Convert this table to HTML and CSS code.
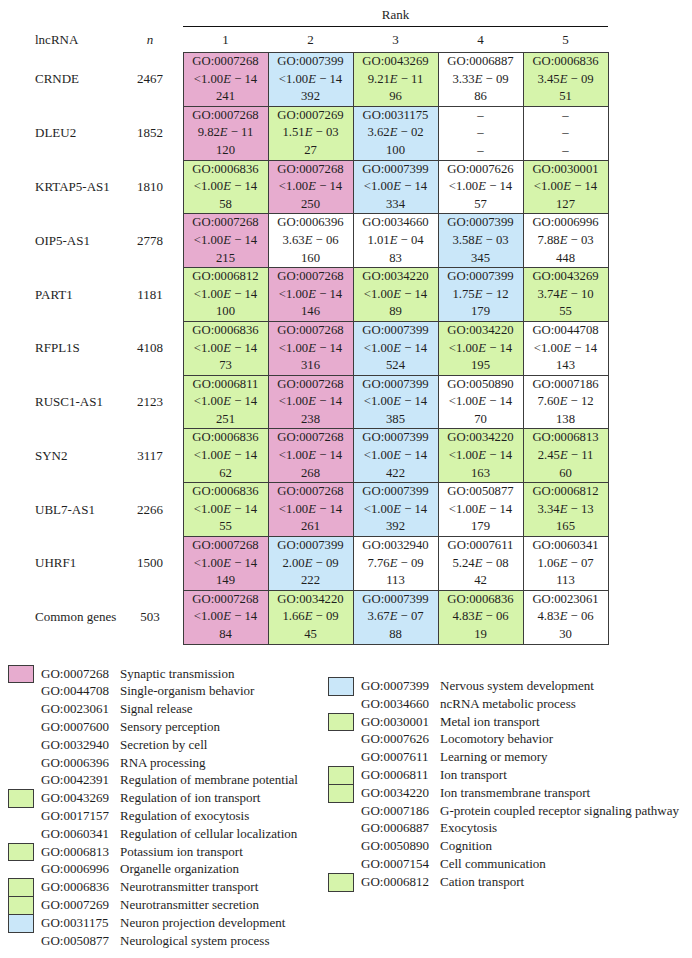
FILE: index.html
```html
<!DOCTYPE html>
<html>
<head>
<meta charset="utf-8">
<link rel="stylesheet" href="styles.css">
</head>
<body>
<table class="go-table">
  <colgroup>
    <col class="c-label"><col class="c-n"><col class="c-sp">
    <col class="c-d"><col class="c-d"><col class="c-d"><col class="c-d"><col class="c-d">
  </colgroup>
  <tr class="rank-row"><td></td><td></td><td></td><td colspan="5" class="rank">Rank</td></tr>
  <tr class="head-row"><td class="lbl">lncRNA</td><td class="n"><i>n</i></td><td></td><td>1</td><td>2</td><td>3</td><td>4</td><td>5</td></tr>
  <tr class="row"><td class="lbl">CRNDE</td><td class="n">2467</td><td></td>
    <td class="d pink">GO:0007268<br>&lt;1.00<i>E</i> − 14<br>241</td>
    <td class="d blue">GO:0007399<br>&lt;1.00<i>E</i> − 14<br>392</td>
    <td class="d green">GO:0043269<br>9.21<i>E</i> − 11<br>96</td>
    <td class="d">GO:0006887<br>3.33<i>E</i> − 09<br>86</td>
    <td class="d green">GO:0006836<br>3.45<i>E</i> − 09<br>51</td></tr>
  <tr class="row"><td class="lbl">DLEU2</td><td class="n">1852</td><td></td>
    <td class="d pink">GO:0007268<br>9.82<i>E</i> − 11<br>120</td>
    <td class="d green">GO:0007269<br>1.51<i>E</i> − 03<br>27</td>
    <td class="d blue">GO:0031175<br>3.62<i>E</i> − 02<br>100</td>
    <td class="d">–<br>–<br>–</td>
    <td class="d">–<br>–<br>–</td></tr>
  <tr class="row"><td class="lbl">KRTAP5-AS1</td><td class="n">1810</td><td></td>
    <td class="d green">GO:0006836<br>&lt;1.00<i>E</i> − 14<br>58</td>
    <td class="d pink">GO:0007268<br>&lt;1.00<i>E</i> − 14<br>250</td>
    <td class="d blue">GO:0007399<br>&lt;1.00<i>E</i> − 14<br>334</td>
    <td class="d">GO:0007626<br>&lt;1.00<i>E</i> − 14<br>57</td>
    <td class="d green">GO:0030001<br>&lt;1.00<i>E</i> − 14<br>127</td></tr>
  <tr class="row"><td class="lbl">OIP5-AS1</td><td class="n">2778</td><td></td>
    <td class="d pink">GO:0007268<br>&lt;1.00<i>E</i> − 14<br>215</td>
    <td class="d">GO:0006396<br>3.63<i>E</i> − 06<br>160</td>
    <td class="d">GO:0034660<br>1.01<i>E</i> − 04<br>83</td>
    <td class="d blue">GO:0007399<br>3.58<i>E</i> − 03<br>345</td>
    <td class="d">GO:0006996<br>7.88<i>E</i> − 03<br>448</td></tr>
  <tr class="row"><td class="lbl">PART1</td><td class="n">1181</td><td></td>
    <td class="d green">GO:0006812<br>&lt;1.00<i>E</i> − 14<br>100</td>
    <td class="d pink">GO:0007268<br>&lt;1.00<i>E</i> − 14<br>146</td>
    <td class="d green">GO:0034220<br>&lt;1.00<i>E</i> − 14<br>89</td>
    <td class="d blue">GO:0007399<br>1.75<i>E</i> − 12<br>179</td>
    <td class="d green">GO:0043269<br>3.74<i>E</i> − 10<br>55</td></tr>
  <tr class="row"><td class="lbl">RFPL1S</td><td class="n">4108</td><td></td>
    <td class="d green">GO:0006836<br>&lt;1.00<i>E</i> − 14<br>73</td>
    <td class="d pink">GO:0007268<br>&lt;1.00<i>E</i> − 14<br>316</td>
    <td class="d blue">GO:0007399<br>&lt;1.00<i>E</i> − 14<br>524</td>
    <td class="d green">GO:0034220<br>&lt;1.00<i>E</i> − 14<br>195</td>
    <td class="d">GO:0044708<br>&lt;1.00<i>E</i> − 14<br>143</td></tr>
  <tr class="row"><td class="lbl">RUSC1-AS1</td><td class="n">2123</td><td></td>
    <td class="d green">GO:0006811<br>&lt;1.00<i>E</i> − 14<br>251</td>
    <td class="d pink">GO:0007268<br>&lt;1.00<i>E</i> − 14<br>238</td>
    <td class="d blue">GO:0007399<br>&lt;1.00<i>E</i> − 14<br>385</td>
    <td class="d">GO:0050890<br>&lt;1.00<i>E</i> − 14<br>70</td>
    <td class="d">GO:0007186<br>7.60<i>E</i> − 12<br>138</td></tr>
  <tr class="row"><td class="lbl">SYN2</td><td class="n">3117</td><td></td>
    <td class="d green">GO:0006836<br>&lt;1.00<i>E</i> − 14<br>62</td>
    <td class="d pink">GO:0007268<br>&lt;1.00<i>E</i> − 14<br>268</td>
    <td class="d blue">GO:0007399<br>&lt;1.00<i>E</i> − 14<br>422</td>
    <td class="d green">GO:0034220<br>&lt;1.00<i>E</i> − 14<br>163</td>
    <td class="d green">GO:0006813<br>2.45<i>E</i> − 11<br>60</td></tr>
  <tr class="row"><td class="lbl">UBL7-AS1</td><td class="n">2266</td><td></td>
    <td class="d green">GO:0006836<br>&lt;1.00<i>E</i> − 14<br>55</td>
    <td class="d pink">GO:0007268<br>&lt;1.00<i>E</i> − 14<br>261</td>
    <td class="d blue">GO:0007399<br>&lt;1.00<i>E</i> − 14<br>392</td>
    <td class="d">GO:0050877<br>&lt;1.00<i>E</i> − 14<br>179</td>
    <td class="d green">GO:0006812<br>3.34<i>E</i> − 13<br>165</td></tr>
  <tr class="row"><td class="lbl">UHRF1</td><td class="n">1500</td><td></td>
    <td class="d pink">GO:0007268<br>&lt;1.00<i>E</i> − 14<br>149</td>
    <td class="d blue">GO:0007399<br>2.00<i>E</i> − 09<br>222</td>
    <td class="d">GO:0032940<br>7.76<i>E</i> − 09<br>113</td>
    <td class="d">GO:0007611<br>5.24<i>E</i> − 08<br>42</td>
    <td class="d">GO:0060341<br>1.06<i>E</i> − 07<br>113</td></tr>
  <tr class="row"><td class="lbl">Common genes</td><td class="n">503</td><td></td>
    <td class="d pink">GO:0007268<br>&lt;1.00<i>E</i> − 14<br>84</td>
    <td class="d green">GO:0034220<br>1.66<i>E</i> − 09<br>45</td>
    <td class="d blue">GO:0007399<br>3.67<i>E</i> − 07<br>88</td>
    <td class="d green">GO:0006836<br>4.83<i>E</i> − 06<br>19</td>
    <td class="d">GO:0023061<br>4.83<i>E</i> − 06<br>30</td></tr>
</table>

<div class="legend">
  <div class="legend-col">
    <div class="item"><span class="sw pink"></span><span>GO:0007268</span><span>Synaptic transmission</span></div>
    <div class="item"><span></span><span>GO:0044708</span><span>Single-organism behavior</span></div>
    <div class="item"><span></span><span>GO:0023061</span><span>Signal release</span></div>
    <div class="item"><span></span><span>GO:0007600</span><span>Sensory perception</span></div>
    <div class="item"><span></span><span>GO:0032940</span><span>Secretion by cell</span></div>
    <div class="item"><span></span><span>GO:0006396</span><span>RNA processing</span></div>
    <div class="item"><span></span><span>GO:0042391</span><span>Regulation of membrane potential</span></div>
    <div class="item"><span class="sw green"></span><span>GO:0043269</span><span>Regulation of ion transport</span></div>
    <div class="item"><span></span><span>GO:0017157</span><span>Regulation of exocytosis</span></div>
    <div class="item"><span></span><span>GO:0060341</span><span>Regulation of cellular localization</span></div>
    <div class="item"><span class="sw green"></span><span>GO:0006813</span><span>Potassium ion transport</span></div>
    <div class="item"><span></span><span>GO:0006996</span><span>Organelle organization</span></div>
    <div class="item"><span class="sw green"></span><span>GO:0006836</span><span>Neurotransmitter transport</span></div>
    <div class="item"><span class="sw green"></span><span>GO:0007269</span><span>Neurotransmitter secretion</span></div>
    <div class="item"><span class="sw blue"></span><span>GO:0031175</span><span>Neuron projection development</span></div>
    <div class="item"><span></span><span>GO:0050877</span><span>Neurological system process</span></div>
  </div>
  <div class="legend-col right">
    <div class="item"><span class="sw blue"></span><span>GO:0007399</span><span>Nervous system development</span></div>
    <div class="item"><span></span><span>GO:0034660</span><span>ncRNA metabolic process</span></div>
    <div class="item"><span class="sw green"></span><span>GO:0030001</span><span>Metal ion transport</span></div>
    <div class="item"><span></span><span>GO:0007626</span><span>Locomotory behavior</span></div>
    <div class="item"><span></span><span>GO:0007611</span><span>Learning or memory</span></div>
    <div class="item"><span class="sw green"></span><span>GO:0006811</span><span>Ion transport</span></div>
    <div class="item"><span class="sw green"></span><span>GO:0034220</span><span>Ion transmembrane transport</span></div>
    <div class="item"><span></span><span>GO:0007186</span><span>G-protein coupled receptor signaling pathway</span></div>
    <div class="item"><span></span><span>GO:0006887</span><span>Exocytosis</span></div>
    <div class="item"><span></span><span>GO:0050890</span><span>Cognition</span></div>
    <div class="item"><span></span><span>GO:0007154</span><span>Cell communication</span></div>
    <div class="item"><span class="sw green"></span><span>GO:0006812</span><span>Cation transport</span></div>
  </div>
</div>
</body>
</html>
```

FILE: styles.css
```css
html, body {
  margin: 0;
  padding: 0;
  background: #fff;
}
body {
  font-family: "Liberation Serif", "Times New Roman", serif;
  color: #1e1e1e;
  font-size: 13px;
}
.go-table {
  margin: 4px 0 0 35px;
  border-collapse: collapse;
  table-layout: fixed;
  width: 573px;
}
.c-label { width: 90px; }
.c-n { width: 50px; }
.c-sp { width: 8px; }
.c-d { width: 85px; }
.go-table td {
  padding: 0;
  text-align: center;
  vertical-align: middle;
  white-space: nowrap;
}
.rank-row td { height: 22px; }
.rank-row .rank {
  border-bottom: 1px solid #111;
}
.head-row td { height: 25px; }
.go-table td.lbl { text-align: left; }
.go-table .n { text-align: center; }
.go-table td.d {
  font-size: 12.7px;
  line-height: 17.6px;
  border: 1px solid #3c3c3c;
}
.pink { background: #e7accf; }
.green { background: #d6f4ab; }
.blue { background: #cae7f9; }

.legend {
  display: flex;
  margin-top: 20px;
  padding-left: 8px;
}
.legend-col {
  width: 320px;
}
.legend-col.right {
  margin-top: 12.5px;
}
.item {
  display: grid;
  grid-template-columns: 26px 72px 1fr;
  column-gap: 7px;
  line-height: 17.8px;
  height: 17.8px;
  white-space: nowrap;
}
.sw {
  box-sizing: border-box;
  height: 18.8px;
  border: 1px solid #3c3c3c;
  margin-bottom: -1px;
}
```
